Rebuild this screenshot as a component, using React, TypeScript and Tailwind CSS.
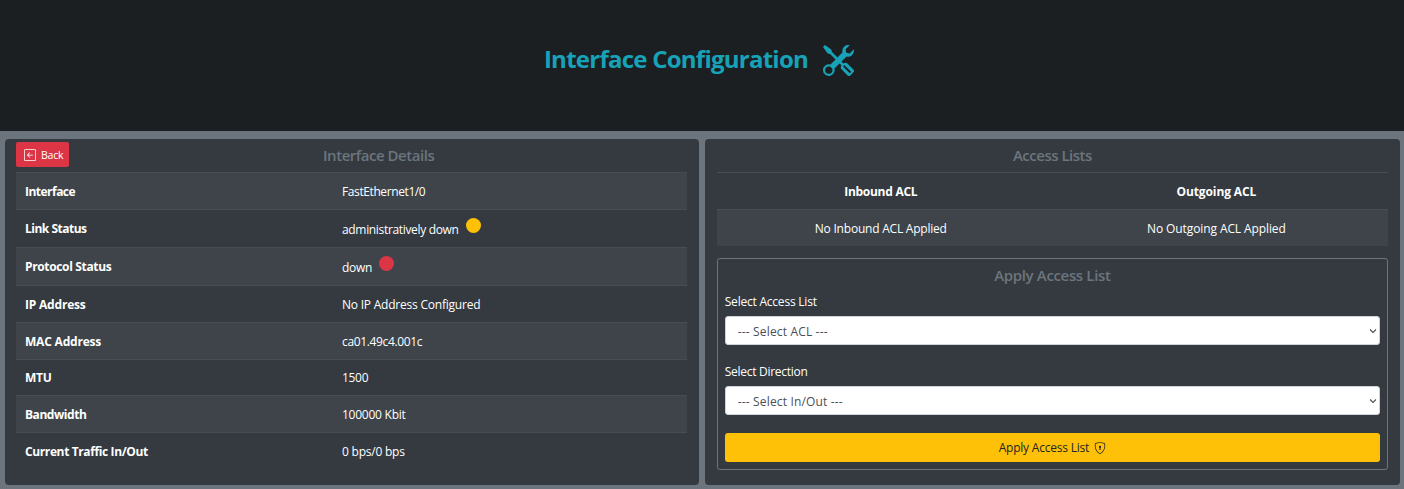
import type { ReactNode } from "react";
import { BsArrowLeftSquare, BsShieldLock, BsTools } from "react-icons/bs";

type Detail = { label: string; value: string; row: string; labelClass: string; valueClass: string; dot?: string };

const details: Detail[] = [
  { label: "Interface", value: "FastEthernet1/0", row: "h-[37px] pt-px", labelClass: "tracking-[-0.52px]", valueClass: "tracking-[-0.4px]" },
  { label: "Link Status", value: "administratively down", row: "h-[38px]", labelClass: "tracking-[-0.5px]", valueClass: "pt-[3px] tracking-[-0.33px]", dot: "bg-[#ffc107]" },
  { label: "Protocol Status", value: "down", row: "h-[38px]", labelClass: "tracking-[-0.35px]", valueClass: "pt-[3px] tracking-[-0.3px]", dot: "bg-[#dc3545]" },
  { label: "IP Address", value: "No IP Address Configured", row: "h-[37px] pt-px", labelClass: "tracking-[-0.2px]", valueClass: "tracking-[-0.22px]" },
  { label: "MAC Address", value: "ca01.49c4.001c", row: "h-[37px] pt-px", labelClass: "tracking-[-0.2px]", valueClass: "tracking-[-0.35px]" },
  { label: "MTU", value: "1500", row: "h-[36px] pt-px", labelClass: "tracking-[-0.2px]", valueClass: "tracking-[-0.3px]" },
  { label: "Bandwidth", value: "100000 Kbit", row: "h-[37px] pt-px", labelClass: "tracking-[-0.45px]", valueClass: "tracking-[-0.25px]" },
  { label: "Current Traffic In/Out", value: "0 bps/0 bps", row: "h-[37px] pt-px", labelClass: "tracking-[-0.38px]", valueClass: "tracking-[-0.22px]" },
];

function Card({ className, children }: { className: string; children: ReactNode }) {
  return <section className={`flex flex-1 min-w-0 flex-col rounded-[4px] bg-[#343a40] pt-1 ${className}`}>{children}</section>;
}

function SelectField({ label, labelClass, placeholder }: { label: string; labelClass: string; placeholder: string }) {
  return (
    <div>
      <div className={`h-[18px] leading-[20px] ${labelClass}`}>{label}</div>
      <div className="mt-[6px] flex h-[29px] items-center justify-between rounded-[3px] border border-[#ced4da] bg-white pl-3 pr-[2px] text-[#495057]">
        <span className="pt-[2px] tracking-[0.16px]">{placeholder}</span>
        <svg className="h-2 w-2" viewBox="0 0 8 8" fill="none" stroke="#495057" strokeWidth="1.1">
          <path d="M1 2.5 4 5.5 7 2.5" />
        </svg>
      </div>
    </div>
  );
}

export default function App() {
  return (
    <div className="flex h-[489px] w-[1404px] flex-col bg-[#6c757d] font-['Open_Sans',sans-serif] text-[12px] leading-[18px] text-white">
      <header className="flex h-[131px] items-start justify-center bg-[#1b1f22] pt-[43px] pr-[6px] text-[#17a2b8]">
        <h1 className="text-[24px] font-bold leading-[32px] tracking-[-0.75px]">Interface Configuration</h1>
        <BsTools className="ml-[15px] mt-[2px] h-[31px] w-[31px]" />
      </header>
      <main className="flex h-[354px] gap-[6px] pt-2 pl-[4.5px] pr-[4.5px]">
        <Card className="pl-[11.5px] pr-[11.5px]">
          <div className="relative h-[29px] shrink-0">
            <button className="absolute left-0 top-[-1px] flex h-[25px] w-[53px] items-center rounded-[2px] bg-[#dc3545] pl-2 text-[10.5px] tracking-[-0.2px]">
              <BsArrowLeftSquare className="mr-[5px] h-3 w-3" />
              Back
            </button>
            <h2 className="pl-[54px] pt-[3px] text-center text-[15px] font-semibold leading-[18px] tracking-[-0.47px] text-[#6c757d]">Interface Details</h2>
          </div>
          {details.map((d, i) => (
            <div key={d.label} className={`flex items-center border-t border-[#454d55] ${d.row} ${i % 2 ? "" : "bg-[#3e444a]"}`}>
              <span className={`w-[326px] pl-[9px] font-bold ${d.labelClass}`}>{d.label}</span>
              <span className={d.valueClass}>{d.value}</span>
              {d.dot && <i className={`mb-[6px] ml-[7px] h-[15px] w-[15px] rounded-full ${d.dot}`} />}
            </div>
          ))}
        </Card>
        <Card className="pl-3 pr-[11.5px]">
          <h2 className="h-[29px] shrink-0 pt-[3px] text-center text-[15px] font-semibold leading-[18px] tracking-[-0.5px] text-[#6c757d]">Access Lists</h2>
          <div className="flex h-[37px] items-center border-t border-[#454d55] pt-px text-center font-bold">
            <span className="w-[328px] tracking-[-0.27px]">Inbound ACL</span>
            <span className="flex-1 tracking-[-0.1px]">Outgoing ACL</span>
          </div>
          <div className="flex h-[37px] items-center border-t border-[#454d55] bg-[#3e444a] pt-px text-center">
            <span className="w-[328px] tracking-[-0.22px]">No Inbound ACL Applied</span>
            <span className="flex-1 tracking-[-0.1px]">No Outgoing ACL Applied</span>
          </div>
          <div className="mt-3 h-[212px] rounded-[3px] border border-[#6c757d] px-[7px] pt-2">
            <h2 className="h-[25px] text-center text-[15px] font-semibold leading-[17px] tracking-[-0.35px] text-[#6c757d]">Apply Access List</h2>
            <SelectField label="Select Access List" labelClass="tracking-[-0.22px]" placeholder="--- Select ACL ---" />
            <div className="h-[17px]" />
            <SelectField label="Select Direction" labelClass="tracking-[-0.28px]" placeholder="--- Select In/Out ---" />
            <button className="mt-[18px] flex h-[29px] w-full items-center justify-center rounded-[3px] bg-[#ffc107] tracking-[-0.22px] text-[#212529]">
              Apply Access List
              <BsShieldLock className="ml-[5px] h-3 w-3" />
            </button>
          </div>
        </Card>
      </main>
    </div>
  );
}
